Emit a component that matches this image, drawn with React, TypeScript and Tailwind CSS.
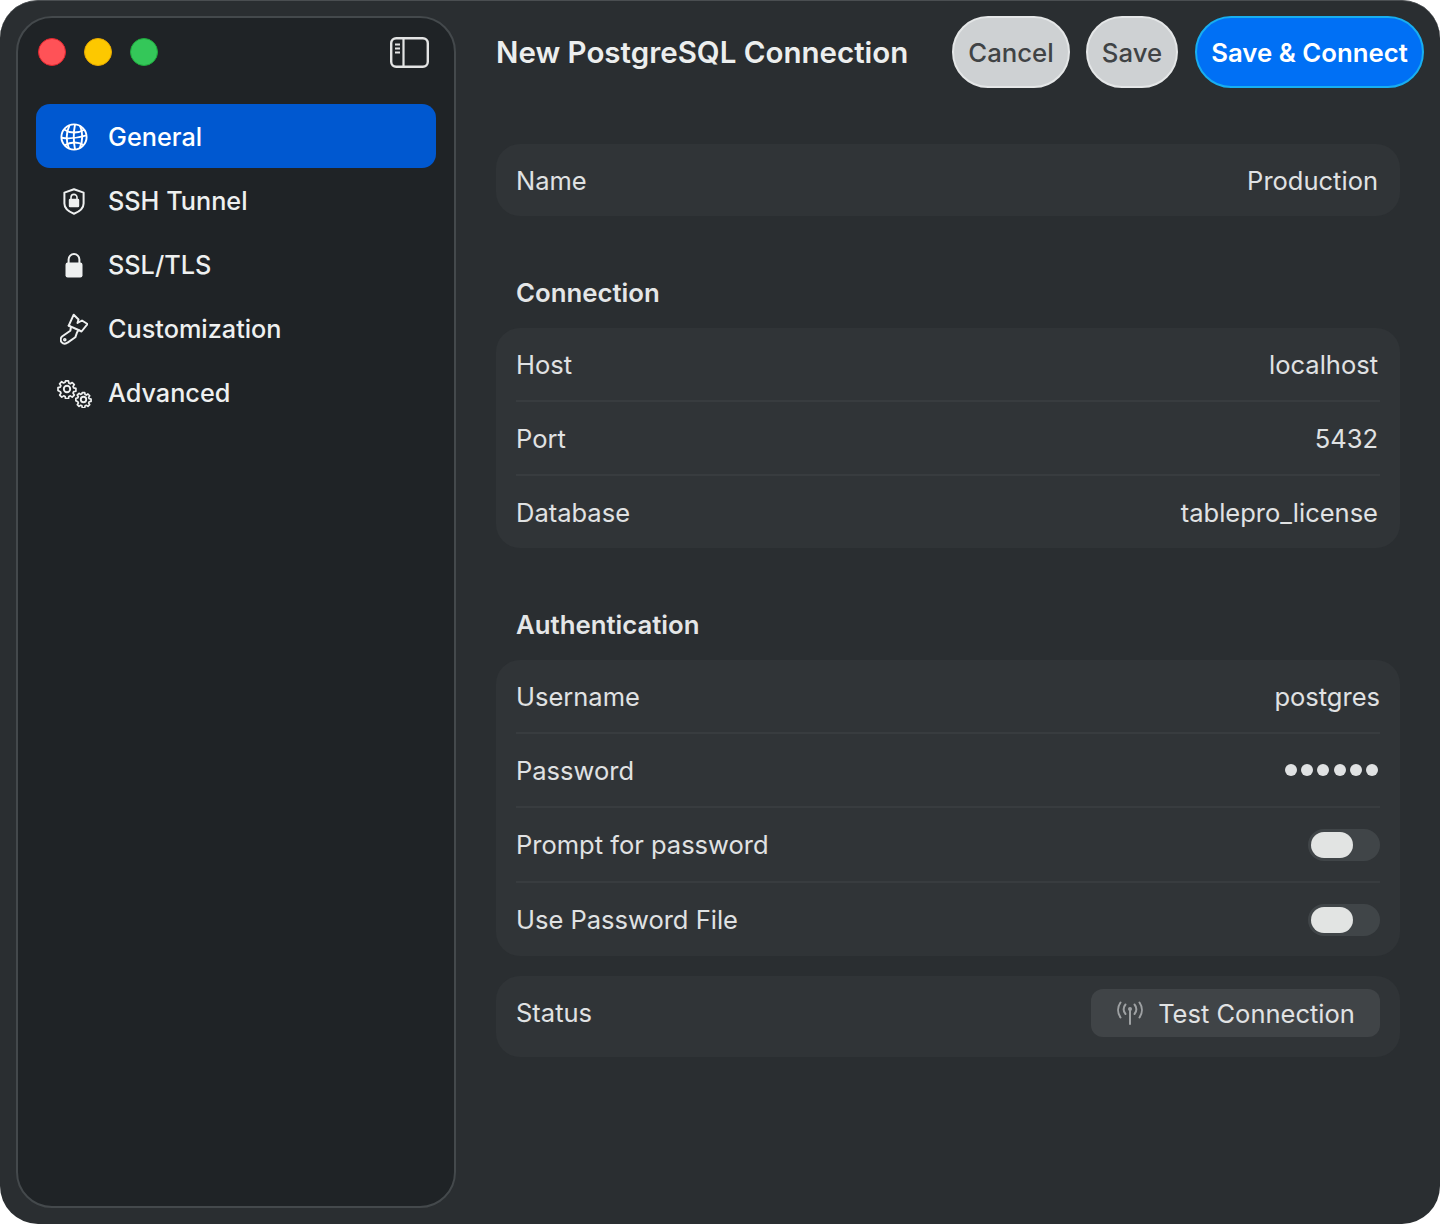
const font = { fontFamily: "Inter, 'Noto Sans', sans-serif" }

const GlobeIcon = () => (
    <svg width="28" height="28" viewBox="0 0 28 28" fill="none" stroke="currentColor" strokeWidth="1.9">
        <circle cx="14" cy="14" r="12.6" />
        <path d="M15 1.6C13.5 9 13.5 19 15 26.4" />
        <path d="M9.5 2.4C6 9 5.8 19 9 25.6" />
        <path d="M20 2.8C23 8.5 23 18.5 19.8 25.2" />
        <path d="M4 6.5C10 10.5 18 10.5 24.2 6.8" />
        <path d="M1.5 14.8C9 16 18 15 26.4 12.4" />
        <path d="M4.5 22.4C10.5 19 18 19 23.8 22" />
    </svg>
)

const ShieldIcon = () => (
    <svg width="22" height="27" viewBox="0 0 22 27" fill="none">
        <path d="M11 1.2 20.6 4.6V15.5C20.6 20 16.5 23.6 11 25.8 5.5 23.6 1.4 20 1.4 15.5V4.6Z" stroke="currentColor" strokeWidth="2" strokeLinejoin="round" />
        <path d="M8 11.5V9.4a3 3 0 0 1 6 0v2.1" stroke="currentColor" strokeWidth="1.6" />
        <rect x="5.8" y="10.8" width="10.4" height="8.4" rx="1.3" fill="currentColor" />
    </svg>
)

const LockIcon = () => (
    <svg width="18" height="26" viewBox="0 0 18 26" fill="none">
        <path d="M3.6 12V7.4a5.4 5.4 0 0 1 10.8 0V12" stroke="currentColor" strokeWidth="2" />
        <rect x="0.5" y="10.6" width="17" height="14.8" rx="2.2" fill="currentColor" />
    </svg>
)

const BrushIcon = () => (
    <svg width="28" height="32" viewBox="0 0 28 32" fill="none" stroke="currentColor" strokeWidth="2" strokeLinejoin="round" strokeLinecap="round">
        <path d="M13.7 1.7 18.5 6.5 17.5 10 22 7.5 27.5 11 21.5 18.5 18.5 17 17 19.5 15.3 24.3 7.6 29.6A4 4 0 0 1 2 23.5L10.3 17.7 11 14 8.7 12.7Z" />
        <path d="M8.7 12.7 18.5 17" />
        <circle cx="4.8" cy="26.8" r="0.8" />
    </svg>
)

const Gear = ({ size, stroke }: any) => (
    <svg width={size} height={size} viewBox="0 0 20 20" fill="none" stroke="currentColor" strokeWidth={stroke} strokeLinejoin="round">
        <path d="M8.4 1h3.2l.5 2.5 1.6.7 2.1-1.4 2.3 2.3-1.4 2.1.7 1.6 2.5.5v3.2l-2.5.5-.7 1.6 1.4 2.1-2.3 2.3-2.1-1.4-1.6.7-.5 2.5H8.4l-.5-2.5-1.6-.7-2.1 1.4-2.3-2.3 1.4-2.1-.7-1.6L0 11.6V8.4l2.5-.5.7-1.6-1.4-2.1 2.3-2.3 2.1 1.4 1.6-.7Z" transform="translate(1 1) scale(.9)" />
        <circle cx="10" cy="10" r="3.2" />
    </svg>
)

const GearsIcon = () => (
    <div className="relative h-[29px] w-[35px]">
        <div className="absolute left-0 top-0"><Gear size={20} stroke={1.9} /></div>
        <div className="absolute bottom-0 right-0"><Gear size={17} stroke={2.2} /></div>
    </div>
)

const SidebarIcon = () => (
    <svg width="39" height="31" viewBox="0 0 39 31" fill="none" stroke="#e3e4e4">
        <rect x="1.2" y="1.2" width="36.6" height="28.6" rx="5" strokeWidth="2.4" />
        <path d="M13.5 1.5v28" strokeWidth="2.2" />
        <path d="M5 7.5h5M5 11.5h5M5 15.5h5" strokeWidth="1.9" />
    </svg>
)

const AntennaIcon = () => (
    <svg width="28" height="24" viewBox="0 0 28 24" fill="none" stroke="#9ea1a3" strokeWidth="2" strokeLinecap="round">
        <path d="M14 9v14" />
        <circle cx="14" cy="8" r="2" fill="#9ea1a3" stroke="none" />
        <path d="M9.5 3.5a7 7 0 0 0 0 9.5M18.5 3.5a7 7 0 0 1 0 9.5" />
        <path d="M4.5 1.5a13 13 0 0 0 0 15M23.5 1.5a13 13 0 0 1 0 15" />
    </svg>
)

const NavItem = ({ icon, label, active }: any) => (
    <div className={`flex h-16 items-center rounded-[14px] ${active ? "bg-[#0058d0] text-white" : "text-[#eef0f0]"}`}>
        <div className="flex w-[72px] justify-center pl-[4px] pt-[2px]">{icon}</div>
        <span className="pt-[4px] text-[25.25px] font-medium">{label}</span>
    </div>
)

const Row = ({ label, children, last, height }: any) => (
    <div className={`flex items-center justify-between ${height} ${last ? "" : "border-b-2 border-[#383c3f]"}`}>
        <span className="pt-[2px]">{label}</span>
        {children}
    </div>
)

const Group = ({ children }: any) => (
    <div className="rounded-[24px] bg-[#303437] px-5">{children}</div>
)

const Heading = ({ children }: any) => (
    <div className="flex h-[112px] items-end pb-[19px] pl-5 text-[25.75px] font-semibold leading-[32px] text-[#e4e6e7]">{children}</div>
)

const Toggle = () => (
    <div className="flex h-8 w-[72px] items-center rounded-full bg-[#404548] pl-[3px]">
        <div className="h-[26px] w-[42px] rounded-full bg-[#e2e4e3]" />
    </div>
)

const App = () => {
    return (
        <div className="h-[1224px] w-[1440px] bg-white" style={font}>
            <div className="flex h-full rounded-[38px] border-t border-[#4a4e51] bg-[#2a2e31] px-[16px] pb-[16px] pt-[15px]">
                <aside className="flex w-[440px] flex-col rounded-[36px] border-2 border-[#44494c] bg-[#1f2326] px-[18px]">
                    <div className="flex h-[86px] items-center justify-between pb-[18px] pl-[2px] pr-[7px]">
                        <div className="flex gap-[18px]">
                            <div className="h-7 w-7 rounded-full border border-[#e0262e] bg-[#ff5257]" />
                            <div className="h-7 w-7 rounded-full border border-[#e6a800] bg-[#fdc800]" />
                            <div className="h-7 w-7 rounded-full border border-[#1ea83c] bg-[#34c759]" />
                        </div>
                        <SidebarIcon />
                    </div>
                    <nav className="flex flex-col">
                        <NavItem active icon={<GlobeIcon />} label="General" />
                        <NavItem icon={<ShieldIcon />} label="SSH Tunnel" />
                        <NavItem icon={<LockIcon />} label="SSL/TLS" />
                        <NavItem icon={<BrushIcon />} label="Customization" />
                        <NavItem icon={<GearsIcon />} label="Advanced" />
                    </nav>
                </aside>
                <main className="flex-1 pl-10 text-[25.5px] text-[#e0e2e3]">
                    <header className="flex h-[72px] items-center justify-between">
                        <h1 className="text-[29.5px] font-semibold text-[#eceeee]">New PostgreSQL Connection</h1>
                        <div className="flex gap-[16px]">
                            <button className="h-[72px] w-[118px] rounded-[36px] border-2 border-[#e4e6e7] bg-[#ced1d3] pt-[2px] text-[25.75px] font-medium text-[#404345]">Cancel</button>
                            <button className="mr-px h-[72px] w-[92px] rounded-[36px] border-2 border-[#e4e6e7] bg-[#ced1d3] pt-[2px] text-[25.75px] font-medium text-[#404345]">Save</button>
                            <button className="h-[72px] w-[229px] rounded-[36px] border-2 border-[#18aef0] bg-[#0070f5] pt-[2px] text-[25.75px] font-semibold text-white">Save &amp; Connect</button>
                        </div>
                    </header>
                    <div className="mt-[56px] w-[904px]">
                        <Group>
                            <Row last label="Name" height="h-[72px]"><span className="pr-[2px] pt-[2px]">Production</span></Row>
                        </Group>
                        <Heading>Connection</Heading>
                        <Group>
                            <Row label="Host" height="h-[74px]"><span className="pr-[2px] pt-[2px]">localhost</span></Row>
                            <Row label="Port" height="h-[74px]"><span className="pr-[2px] pt-[2px]">5432</span></Row>
                            <Row last label="Database" height="h-[72px]"><span className="pr-[2px] pt-[2px]">tablepro_license</span></Row>
                        </Group>
                        <Heading>Authentication</Heading>
                        <Group>
                            <Row label="Username" height="h-[74px]"><span className="pt-[2px]">postgres</span></Row>
                            <Row label="Password" height="h-[74px]">
                                <div className="flex gap-[4.25px] pr-[2px]">
                                    {[0, 1, 2, 3, 4, 5].map((i) => <div key={i} className="h-3 w-3 rounded-full bg-[#e0e2e3]" />)}
                                </div>
                            </Row>
                            <Row label="Prompt for password" height="h-[75px]"><Toggle /></Row>
                            <Row last label="Use Password File" height="h-[73px]"><Toggle /></Row>
                        </Group>
                        <div className="mt-5">
                            <Group>
                                <Row last label="Status" height="h-[81px] pb-2">
                                    <button className="flex h-12 w-[289px] items-center justify-center gap-[14px] rounded-[12px] bg-[#404447] text-[#e0e2e3]">
                                        <AntennaIcon />
                                        <span className="pt-[4px]">Test Connection</span>
                                    </button>
                                </Row>
                            </Group>
                        </div>
                    </div>
                </main>
            </div>
        </div>
    )
}

export default App
